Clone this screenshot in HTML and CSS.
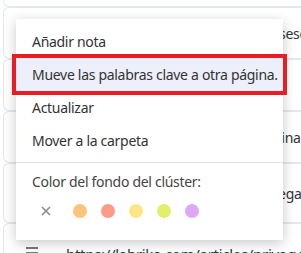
FILE: index.html
```html
<!DOCTYPE html>
<html lang="es">
<head>
<meta charset="UTF-8">
<meta name="viewport" content="width=device-width, initial-scale=1.0">
<title>Clúster menú</title>
<link rel="stylesheet" href="styles.css">
</head>
<body>
<!-- filas de fondo -->
<div class="list">
<div class="row row-top"></div>
<div class="row"><span class="row-text">Pesese</span></div>
<div class="row"></div>
<div class="row"><span class="row-text">páginas</span></div>
<div class="row row-tall"><span class="row-text">agregar</span></div>
<div class="row row-url">
<span class="burger"><i></i><i></i><i></i></span>
<span class="url">https://labrika.com/articles/privacy-policy</span>
</div>
</div>

<!-- menú contextual -->
<div class="menu">
<div class="menu-item">Añadir nota</div>
<div class="menu-item active">Mueve las palabras clave a otra página.</div>
<div class="menu-item">Actualizar</div>
<div class="menu-item">Mover a la carpeta</div>
<div class="menu-sep"></div>
<div class="menu-label">Color del fondo del clúster:</div>
<div class="colors">
<span class="clear">
<svg viewBox="0 0 10 10" width="10" height="10">
<path d="M1 1L9 9M9 1L1 9" stroke="#8a8a8a" stroke-width="1.6" fill="none"/>
</svg>
</span>
<span class="dot orange"></span>
<span class="dot salmon"></span>
<span class="dot yellow"></span>
<span class="dot lime"></span>
<span class="dot violet"></span>
</div>
</div>
</body>
</html>
```

FILE: styles.css
```css
/* página */
body {
margin: 0;
background: #fff;
font-family: "Noto Sans", "Open Sans", sans-serif;
color: #333;
overflow: hidden;
}

/* filas de fondo */
.list {
padding-left: 3px;
margin-top: -8px;
}

.row {
height: 50px;
border: 1px solid #e3e7f0;
border-right: none;
border-radius: 6px 0 0 6px;
position: relative;
font-size: 14px;
letter-spacing: -0.3px;
}

.row-top {
height: 13px;
}

.row-tall {
height: 58px;
}

.row-text {
position: absolute;
right: -6px;
top: 50%;
transform: translateY(-50%);
}

.row-url {
display: flex;
align-items: flex-start;
gap: 28px;
padding: 20px 0 0 22px;
}

.burger {
display: flex;
flex-direction: column;
gap: 3px;
width: 12px;
flex-shrink: 0;
padding-top: 3px;
}

.burger i {
display: block;
height: 2px;
background: #777;
}

.url {
white-space: nowrap;
font-size: 15px;
}

/* menú contextual */
.menu {
position: absolute;
top: 19px;
left: 16px;
width: 267px;
background: #fff;
padding: 6px 0 0;
box-shadow: 0 3px 12px rgba(0, 0, 0, 0.22);
font-size: 14px;
letter-spacing: -0.3px;
color: #333;
}

.menu-item {
height: 33px;
line-height: 34px;
padding-left: 16px;
white-space: nowrap;
}

.menu-item.active {
background: #edf0fa;
outline: 4px solid #ec1c24;
position: relative;
}

.menu-sep {
height: 1px;
background: #e2e2e2;
margin-top: 5px;
}

.menu-label {
padding: 9px 0 0 16px;
line-height: 20px;
color: #444;
}

.colors {
display: flex;
align-items: center;
gap: 14px;
padding: 12px 0 22px 25px;
}

.clear {
width: 10px;
height: 14px;
display: flex;
align-items: center;
margin-right: 8px;
}

.dot {
width: 14px;
height: 14px;
border-radius: 50%;
}

.orange { background: #fdc47b; }
.salmon { background: #fd9a88; }
.yellow { background: #fde485; }
.lime { background: #e2ef69; }
.violet { background: #dfa8f4; }
```
